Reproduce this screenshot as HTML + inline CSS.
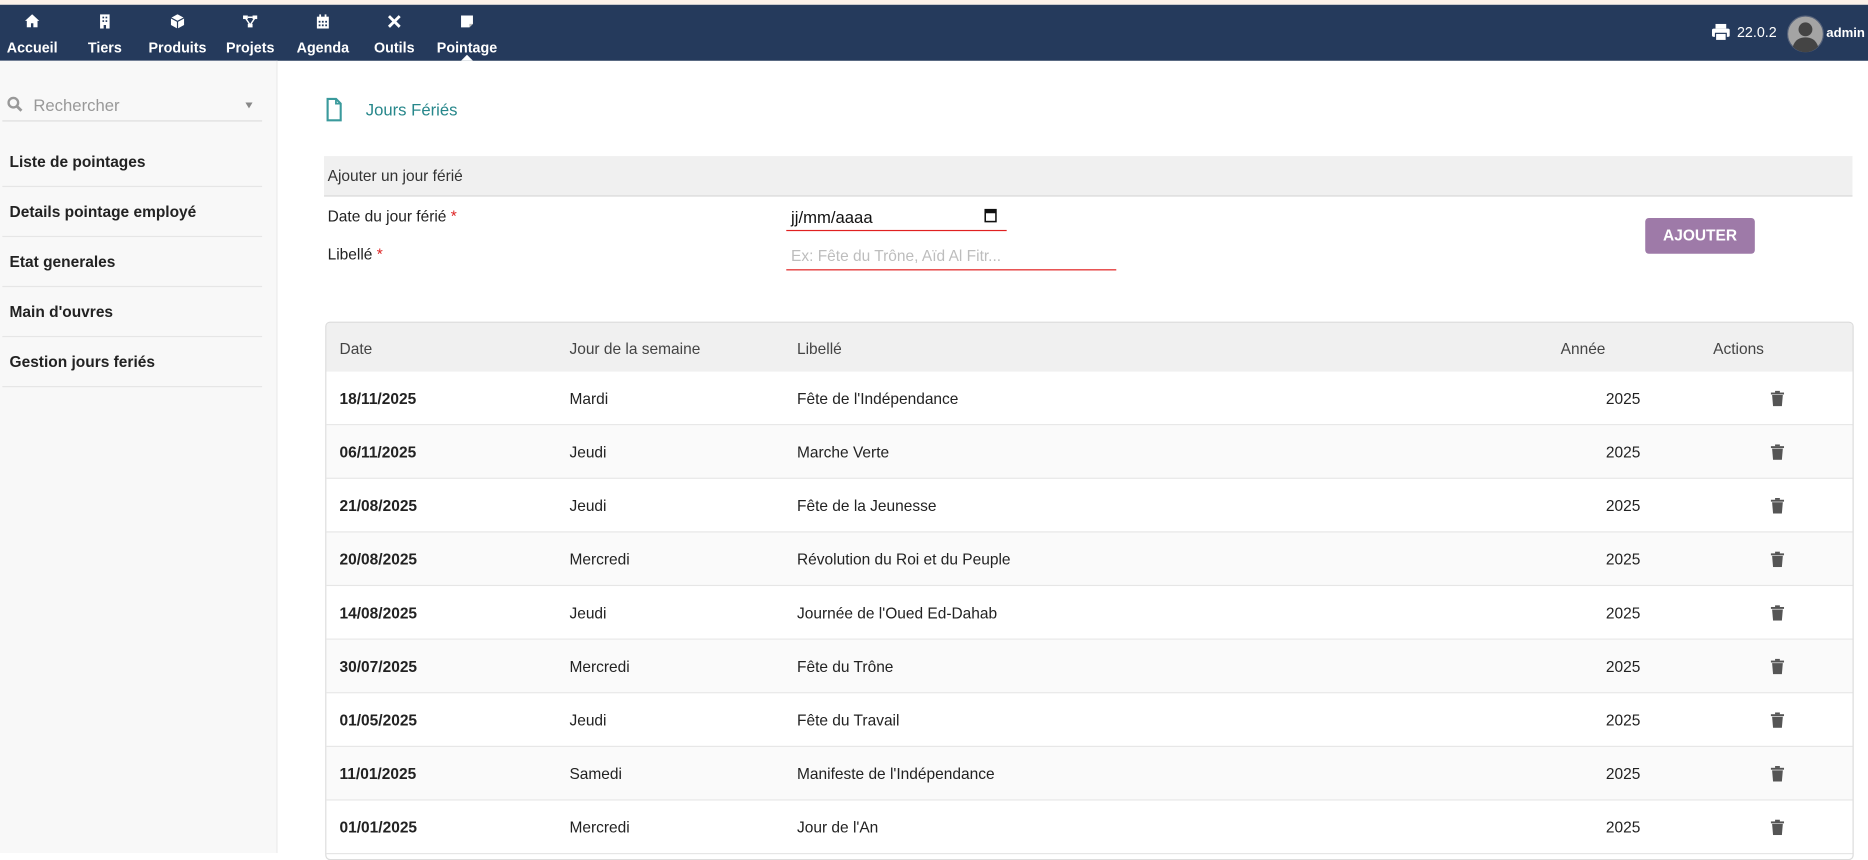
<!DOCTYPE html>
<html><head><meta charset="utf-8"><style>
html,body{margin:0;padding:0;width:1868px;height:853px;overflow:hidden;background:#fff}
#w{position:absolute;left:0;top:0;width:1568px;height:716px;transform:scale(1.19133);transform-origin:0 0;font-family:"Liberation Sans",sans-serif;}
.a{position:absolute;white-space:nowrap}
#top{position:absolute;left:0;top:0;width:1568px;height:4px;background:#fbf1ea}
#nav{position:absolute;left:0;top:4px;width:1568px;height:47px;background:#253a5c}
.ni{position:absolute;top:0;height:47px;color:#fff;font-size:12px;font-weight:bold;text-align:center}
.ni svg{position:absolute;top:8px;left:50%;margin-left:-6px}
.ni span{position:absolute;top:29px;left:0;right:0}
#side{position:absolute;left:0;top:51px;width:232px;height:665px;background:#f8f8f8;border-right:1px solid #ececec}
.mi{position:absolute;left:8px;font-size:13px;font-weight:bold;color:#222}
.sep{position:absolute;left:2px;width:218px;height:1px;background:#e6e6e6}
.th{position:absolute;top:285px;font-size:13px;color:#444}
.row{position:absolute;left:274px;width:1281px;height:44px;border-bottom:1px solid #e6e6e6;font-size:13px;color:#222}
.row span{position:absolute;top:15px}
</style></head><body><div id="w">
<div id="top"></div>
<div id="nav">
 <div class="ni" style="left:4px;width:46px"><svg width="12" height="11" viewBox="0 0 12 11"><path d="M6 0 0 5.5h1.5V11h3.5V7.5h2V11h3.5V5.5H12z" fill="#fff"/></svg><span>Accueil</span></div>
 <div class="ni" style="left:70px;width:36px"><svg width="12" height="12" viewBox="0 0 12 12"><rect x="2" y="0" width="8" height="12" fill="#fff"/><g fill="#253a5c"><rect x="4" y="2" width="1.4" height="1.4"/><rect x="6.6" y="2" width="1.4" height="1.4"/><rect x="4" y="5" width="1.4" height="1.4"/><rect x="6.6" y="5" width="1.4" height="1.4"/><rect x="5" y="9" width="2" height="3"/></g></svg><span>Tiers</span></div>
 <div class="ni" style="left:124px;width:50px"><svg width="12" height="12" viewBox="0 0 12 12"><path d="M6 0 11.5 3v6L6 12 .5 9V3z" fill="#fff"/><path d="M.5 3 6 6l5.5-3M6 6v6" stroke="#253a5c" stroke-width="1" fill="none"/></svg><span>Produits</span></div>
 <div class="ni" style="left:188px;width:44px"><svg width="12" height="12" viewBox="0 0 12 12"><rect x="0" y="1" width="4" height="3" fill="#fff"/><rect x="8" y="1" width="4" height="3" fill="#fff"/><rect x="4" y="8" width="4" height="3" fill="#fff"/><path d="M2 3l4 6M10 3 6 9M4 2.5h4" stroke="#fff" stroke-width="1.2"/></svg><span>Projets</span></div>
 <div class="ni" style="left:248px;width:46px"><svg width="12" height="12" viewBox="0 0 12 12"><rect x="1" y="2" width="10" height="10" fill="#fff"/><rect x="3" y="0" width="1.5" height="3" fill="#fff"/><rect x="7.5" y="0" width="1.5" height="3" fill="#fff"/><g fill="#253a5c"><rect x="2.5" y="5.5" width="1.5" height="1.5"/><rect x="5.2" y="5.5" width="1.5" height="1.5"/><rect x="8" y="5.5" width="1.5" height="1.5"/><rect x="2.5" y="8.5" width="1.5" height="1.5"/><rect x="5.2" y="8.5" width="1.5" height="1.5"/><rect x="8" y="8.5" width="1.5" height="1.5"/></g></svg><span>Agenda</span></div>
 <div class="ni" style="left:312px;width:38px"><svg width="12" height="12" viewBox="0 0 12 12"><path d="M1.5 1.5l9 9M10.5 1.5l-9 9" stroke="#fff" stroke-width="2.4"/></svg><span>Outils</span></div>
 <div class="ni" style="left:366px;width:52px"><svg width="12" height="12" viewBox="0 0 12 12"><path d="M1 1h10v7l-3 3H1z" fill="#fff"/><path d="M8 11V8h3" fill="#bbb"/></svg><span>Pointage</span></div>
 <div class="a" style="left:387px;top:42px;width:0;height:0;border-left:5px solid transparent;border-right:5px solid transparent;border-bottom:5px solid #fff"></div>
 <svg class="a" style="left:1437px;top:16px" width="15" height="14" viewBox="0 0 15 14"><rect x="3" y="0" width="9" height="4" fill="#fff"/><rect x="0" y="4" width="15" height="7" rx="1.5" fill="#fff"/><rect x="3" y="8" width="9" height="6" fill="#fff" stroke="#253a5c" stroke-width="1"/></svg>
 <div class="a" style="left:1458px;top:16px;font-size:12px;color:#fff">22.0.2</div>
 <svg class="a" style="left:1500px;top:9px" width="31" height="31" viewBox="0 0 32 32"><circle cx="16" cy="16" r="15.5" fill="#a4a4a4" stroke="#56627a"/><circle cx="16" cy="12" r="6" fill="#444"/><path d="M5 27c2-6 6-8 11-8s9 2 11 8a15 15 0 0 1-22 0z" fill="#444"/></svg>
 <div class="a" style="left:1533px;top:18px;font-size:11px;color:#fff;font-weight:bold">admin</div>
</div>
<div id="side">
 <svg class="a" style="left:6px;top:30px" width="13" height="13" viewBox="0 0 13 13"><circle cx="5.2" cy="5.2" r="4" fill="none" stroke="#999" stroke-width="2"/><path d="M8 8l4 4" stroke="#999" stroke-width="2.4"/></svg>
 <div class="a" style="left:28px;top:29px;font-size:14px;color:#999">Rechercher</div>
 <div class="a" style="left:206px;top:35px;width:0;height:0;border-left:3.5px solid transparent;border-right:3.5px solid transparent;border-top:5px solid #888"></div>
 <div class="sep" style="top:50px;background:#ddd"></div>
 <div class="mi" style="top:77px">Liste de pointages</div><div class="sep" style="top:105px"></div>
 <div class="mi" style="top:119px">Details pointage employé</div><div class="sep" style="top:147px"></div>
 <div class="mi" style="top:161px">Etat generales</div><div class="sep" style="top:189px"></div>
 <div class="mi" style="top:203px">Main d'ouvres</div><div class="sep" style="top:231px"></div>
 <div class="mi" style="top:245px">Gestion jours feriés</div><div class="sep" style="top:273px"></div>
</div>
<svg class="a" style="left:274px;top:82px" width="13" height="20" viewBox="0 0 13 20"><path d="M1 1h7l4 4v14H1z" fill="none" stroke="#3a9a9c" stroke-width="1.8"/><path d="M8 1v4h4" fill="none" stroke="#3a9a9c" stroke-width="1.5"/></svg>
<div class="a" style="left:307px;top:84px;font-size:14px;color:#27878b">Jours Fériés</div>
<div class="a" style="left:272px;top:131px;width:1283px;height:33px;background:#f0f0f0;border-bottom:1px solid #d8d8d8"></div>
<div class="a" style="left:275px;top:140px;font-size:13px;color:#333">Ajouter un jour férié</div>
<div class="a" style="left:275px;top:174px;font-size:13px;color:#222">Date du jour férié <span style="color:#d22">*</span></div>
<div class="a" style="left:275px;top:206px;font-size:13px;color:#222">Libellé <span style="color:#d22">*</span></div>
<div class="a" style="left:664px;top:174px;font-size:14px;color:#111">jj/mm/aaaa</div>
<svg class="a" style="left:826px;top:174px" width="11" height="13" viewBox="0 0 11 13"><rect x="1" y="2" width="9" height="10" fill="none" stroke="#111" stroke-width="1.3"/><rect x="1" y="2" width="9" height="3" fill="#111"/></svg>
<div class="a" style="left:660px;top:193px;width:185px;height:1px;background:#e02020"></div>
<div class="a" style="left:664px;top:207px;font-size:13px;color:#bdbdbd">Ex: Fête du Trône, Aïd Al Fitr...</div>
<div class="a" style="left:660px;top:226px;width:277px;height:1px;background:#e02020"></div>
<div class="a" style="left:1381px;top:183px;width:92px;height:30px;background:#9e7aa8;border-radius:3px;color:#fff;font-weight:bold;font-size:13px;text-align:center;line-height:30px">AJOUTER</div>
<div class="a" style="left:273px;top:270px;width:1281px;height:450px;border:1px solid #dcdcdc;border-radius:4px;overflow:hidden">
 <div class="a" style="left:0;top:0;width:1281px;height:41px;background:#f0f0f0"></div>
</div>
<div class="th" style="left:285px">Date</div><div class="th" style="left:478px">Jour de la semaine</div><div class="th" style="left:669px">Libellé</div><div class="th" style="left:1310px">Année</div><div class="th" style="left:1438px">Actions</div>
<div id="rows"></div>
<script>
var d=[["18/11/2025","Mardi","Fête de l'Indépendance"],["06/11/2025","Jeudi","Marche Verte"],["21/08/2025","Jeudi","Fête de la Jeunesse"],["20/08/2025","Mercredi","Révolution du Roi et du Peuple"],["14/08/2025","Jeudi","Journée de l'Oued Ed-Dahab"],["30/07/2025","Mercredi","Fête du Trône"],["01/05/2025","Jeudi","Fête du Travail"],["11/01/2025","Samedi","Manifeste de l'Indépendance"],["01/01/2025","Mercredi","Jour de l'An"]];
var h="";for(var i=0;i<d.length;i++){var t=312+i*45;h+='<div class="row" style="top:'+t+'px;background:'+(i%2?'#fafafa':'#fff')+'"><span style="left:11px;font-weight:bold">'+d[i][0]+'</span><span style="left:204px">'+d[i][1]+'</span><span style="left:395px">'+d[i][2]+'</span><span style="left:1074px">2025</span><svg style="position:absolute;left:1212px;top:16px" width="12" height="13" viewBox="0 0 12 13"><rect x="0.5" y="1.5" width="11" height="1.6" fill="#555"/><rect x="4" y="0" width="4" height="1.6" fill="#555"/><path d="M1.5 3.6h9l-.8 9.4H2.3z" fill="#555"/></svg></div>';}
document.getElementById("rows").innerHTML=h;
</script>
</div></body></html>
